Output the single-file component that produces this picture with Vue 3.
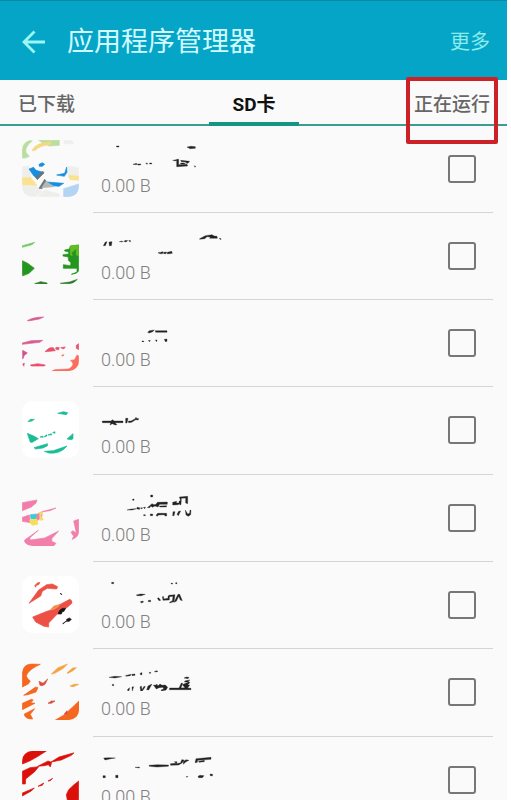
<template>
  <div class="app-manager">
    <!-- Title Bar -->
    <header class="title-bar">
      <button class="back-button" type="button" aria-label="返回">
        <svg width="24" height="24" viewBox="0 0 24 24" fill="none" stroke="currentColor" stroke-width="2.8">
          <path d="M12.500 1.500 2 12l10.500 10.500M2 12h21" />
        </svg>
      </button>
      <h1>应用程序管理器</h1>
      <button class="more-button" type="button">更多</button>
    </header>

    <!-- Tabs -->
    <nav class="tabs">
      <button
        v-for="tab in tabs"
        :key="tab"
        type="button"
        class="tab"
        :class="{ active: tab === activeTab, marked: tab === '正在运行' }"
        @click="activeTab = tab"
      >{{ tab }}</button>
    </nav>

    <!-- App List -->
    <ul class="app-list">
      <li v-for="(app, index) in apps" :key="index" class="app-row">
        <label class="app-label">
          <svg class="app-icon" :class="{ plate: app.plate }" :viewBox="`66 ${app.top} 171 171`" aria-hidden="true">
            <path v-for="(shape, i) in app.icon" :key="i" :fill="shape[0]" :stroke="shape[0]" :d="shape[1]" />
          </svg>
          <span class="app-body">
            <span class="app-text">
              <svg class="app-name" :viewBox="`303 ${app.top} 384 84`" aria-hidden="true">
                <path :d="app.name" />
              </svg>
              <span class="app-size">{{ app.size }}</span>
            </span>
            <input v-model="app.checked" type="checkbox" />
          </span>
        </label>
      </li>
    </ul>
  </div>
</template>

<script setup>
  import { ref } from 'vue';

  const tabs = ['已下载', 'SD卡', '正在运行'];
  const activeTab = ref('SD卡');

  // top is the upper edge of the drawing, icon holds [colour, path] pairs
  const apps = ref([
    {
      top: 45,
      size: '0.00 B',
      checked: false,
      icon: [
        ['#b9dfa0', 'M67 99V66Q70 47 91 46L97 48Q77 61 77 81L88 94 76 99ZM116 46H178V61L148 63 132 56Z'],
        ['#f5d982', 'M96 77Q103 60 128 54L153 50 151 59Q119 61 106 76Z'],
        ['#eeeeec', 'M192 47 214 46 222 56H192ZM67 126 86 123 94 157 67 158ZM204 124 236 128V162L205 155ZM67 181 109 183 125 201 107 214H91Q70 210 67 190ZM133 195 178 207V215H113Z'],
        ['#fae28f', 'M67 158 92 158 111 181 67 179ZM205 151 236 154V166L211 164Z'],
        ['#168fe0', 'M87 132 101 127 108 136 130 142 112 161 101 152ZM117 118 127 113 134 118 127 124 118 124ZM170 150 194 145 200 126 201 142 193 154ZM141 171 191 175 177 184 158 182Z'],
        ['#68767d', 'M107 157 129 139 132 144 112 164ZM117 190 134 163 139 169 126 191Z'],
        ['#b4bab3', 'M137 170 163 185 125 188Z'],
        ['#b4d4f4', 'M191 191 236 177V188Q233 212 211 215H191Z'],
      ],
      name: 'M349 63h8v3h-7zM399 118l11-3v4zM413 117h9v3h-9zM437 115l5-1v4zM449 114h6v3h-6zM561 66l12-2 13 1v5l-16 1zM518 106l11-2v4zM530 103h6v16l25-1 2 5-33 2zM542 106l27 3-5 6-8-1 5-3-17-1zM542 114h12v3h-12zM583 122l4 2-2 3z',
    },
    {
      top: 42,
      size: '0.00 B',
      checked: false,
      icon: [
        ['#78c968', 'M67 98 104 88 96 95 67 103Z'],
        ['#24961f', 'M67 143 83 151 103 166 87 181 67 189ZM211 99 236 96V174Q231 183 214 184L231 177V166H190V155L211 158 213 149 205 142V132L189 129V125L206 123V117L194 114V111L208 108Z'],
        ['#64bd25', 'M211 99 236 96V128L229 126V106L214 120 217 128 211 126Z'],
        ['#287c27', 'M104 212 122 206 141 210V213ZM181 211 209 207 235 198Q231 213 216 213Z'],
      ],
      name: 'M310 98l6-11 5-1-5 12zM327 87l9-1-2 12h-6zM358 86l9-2v3zM371 85l7-3 5 1-5 4zM386 83l5-1v5zM474 119l5-1v4zM481 118l8-2v5l-8 2zM491 118l9-1-2 5h-7zM502 118l13-3 2 6-15 2zM599 77l17-9 20-3 7 4 8 1 1 6h-23l2-4-10-1-7 6-15 2zM657 76l6 1v3z',
    },
    {
      top: 42,
      size: '0.00 B',
      checked: false,
      icon: [
        ['#d65d91', 'M82 62Q97 52 131 51L118 57 90 62ZM67 129 94 122 128 121 119 127 67 133Z'],
        ['#d45192', 'M68 151 82 159 73 166 68 177ZM67 192 73 190 70 206 67 203Z'],
        ['#e9506c', 'M135 155Q148 140 160 143L166 152 150 154ZM168 142 178 143 175 150 167 147ZM182 143 196 141 191 147ZM229 136 236 131V149L229 145ZM91 195 113 191 136 195 133 198H94Z'],
        ['#fb6d5e', 'M231 165 236 168V198Q235 212 218 213H156L165 209 205 207Q217 203 219 193 219 184 211 182L224 179ZM185 166 192 164 188 169Z'],
      ],
      name: 'M443 97l5-5 15-2-5 5-10 4zM466 92h35v5h-34zM426 123h5v3h-5zM445 122l6-1-2 4zM466 120h5l-1 5zM493 118l8-1v7l-5 1z',
    },
    {
      top: 39,
      size: '0.00 B',
      checked: false,
      plate: true,
      icon: [
        ['#18bd96', 'M173 76 190 71 203 74 199 80ZM84 101 91 94 103 94 96 99ZM82 136 103 145 115 152 97 163H91ZM120 147 128 144 129 148ZM131 147 140 140 141 144ZM144 141 154 137 155 141ZM158 134 165 131V136ZM201 153 219 137 219 152 214 155ZM102 179 142 167 143 173 129 180 107 183ZM133 190 160 188 201 174Q182 199 146 195Z'],
      ],
      name: 'M307 99h26l4-4 6 4h26v5h-24l6 6-6 1-8-4-7 4 2-7h-25zM377 91h7l-3 14h-4zM385 99h8l13-7v-3h4v3l5-1v5l-8-1-12 8-9 1z',
    },
    {
      top: 42,
      size: '0.00 B',
      checked: false,
      icon: [
        ['#f37cab', 'M67 83 111 75 108 84 94 96 67 107ZM67 127 88 120 91 143 67 139ZM108 119 126 110 168 99 150 107 127 110 125 128 110 137Z'],
        ['#43c7d0', 'M91 119 109 117 108 132H93Z'],
        ['#f4df5d', 'M89 136 110 132 114 148 97 151 91 145ZM119 113 129 111 122 122 130 134 120 136Z'],
        ['#f27faa', 'M74 195 115 166 89 189 91 195 134 189 176 168 156 190 155 199 168 205 161 213H98Q78 211 74 200ZM221 138 236 133V172Q233 189 216 193L221 184 213 172 218 167 229 174Z'],
      ],
      name: 'M381 105l13-3 16-1-14 4zM411 97l8 1v5l-8-1zM421 99l6-1-1 4zM430 98l6-2-1 5zM398 72h4v4h-4zM452 60h6v6h-6zM442 98l14-12 6 3 6-1 4-6 30-1v7h-23l-5 8-9-3-8 4-4-4-4 5zM479 93l21-1-1 4h-20zM431 119h5v3h-5zM451 117h7v5h-7zM468 121l5-6h27v8h-5l-2-4-18 1-3 4zM518 82l12-3-1 5h8v-5l6-2-2 8-7 4-16 1zM538 66l25-2v22l-6-2V69l-13 1-1 19h-4l2-15zM519 110h6l-3 12h-4zM531 118l5-9 6-1-7 14zM556 105l7 12 6-2 1-10 3 1-1 13-7 5-7-4z',
    },
    {
      top: 42,
      size: '0.00 B',
      checked: false,
      plate: true,
      icon: [
        ['#ed5045', 'M104 71 112 63 120 61 116 68 109 70 107 76ZM87 124 111 91 116 84 140 68 157 66 173 74 170 81 142 79 127 88 122 102ZM98 165 143 147 164 142 177 129 209 112Q217 115 216 123L204 134 172 156 146 183 146 195 132 193 107 180Z'],
        ['#ef914b', 'M151 143 162 132 181 127 172 137Z'],
        ['#1c1715', 'M174 156Q178 142 188 139L197 139 192 148 187 149 184 156ZM188 185 200 176V172L208 168 214 172 208 178 198 178 190 185ZM180 94 185 96V98Z'],
      ],
      name: 'M335 61h6v4h-6zM513 64h5v2h-5zM527 62h4v3h-4zM409 99l12-3 15 1-12 4h-13zM421 119l7-2 3 3-7 3zM445 115h7v4h-7zM472 109l4-2 6 8-5 1zM487 104h4v7l13-2v-6l4-3v14l-19 1zM507 100l18-2-3 21-14 4 3-4 6-2 2-14-11 1zM522 121l12-24h5l8 19-6-2-5-11-7 15z',
    },
    {
      top: 39,
      size: '0.00 B',
      checked: false,
      icon: [
        ['#f5671f', 'M67 111V64Q71 42 94 42L121 43 105 51Q82 65 79 78 83 89 91 93L85 102ZM71 136 107 111 114 113 108 126 84 134ZM67 160 94 148 100 150 92 158 105 160 67 179ZM73 192 104 176 91 193 98 207H88Q76 205 73 196ZM163 212 193 194 222 167 238 152V177Q235 207 213 212Z'],
        ['#f5a33f', 'M154 72 173 54 202 42 190 55 164 70ZM201 69 218 54 229 53 219 62 204 70ZM210 108 223 103 236 103 220 110Z'],
        ['#dc4e3b', 'M117 94 129 100 143 87 135 103 127 107 120 106ZM144 160 154 153 165 153 154 160ZM193 192 201 182 202 192Z'],
      ],
      name: 'M327 82l17-3 21 1-20 4zM337 103h4v4h-4zM376 77l11-3 7-1-3 4-13 2zM396 73l9-1v4l-9 1zM421 69l5-1v6h-5zM448 67h4v3h-4zM463 65l6-3 5 2-6 2zM383 118l6-5-2 9h-4zM396 111l5-1-4 13zM420 111l4-3 2 11 6-10 4 1-9 13h-5zM440 119l4-11 12-6-10 18zM460 105l5 1 6-3 3 5 6-6 6 4 10-1 7 7-5 8-13 3-2-3 8-3-2-5-12 1-8 4zM509 114h28l7-15 4 1-5 14 12-1-8-9 20-9-14 1 3-4 14-2-8 5 8 2-7 8h6l-6 9 10 1v4h-65zM552 84l7-3 8 1-3 4z',
    },
    {
      top: 48,
      size: '0.00 B',
      checked: false,
      icon: [
        ['#dc100b', 'M67 87V69Q72 49 90 48H139L112 65 89 78ZM67 109 90 98 116 95 104 110 77 132 76 147H67ZM113 94 144 78 155 82 151 96 145 89 133 92ZM153 81 177 66 223 53 214 61 184 75ZM67 174 103 159 94 168 67 183ZM114 154 131 144 127 151ZM144 138 158 130 151 137ZM202 195 199 179 206 164 220 151 236 138V219H211Z'],
      ],
      name: 'M311 69l17-1 18 1-13 2-18 4zM309 122h7v6h-7zM347 121h7v7h-7zM405 97l13-1v3zM447 91l25-2 34 1-1 4-34 2-23-2zM511 86l17-1-5-5h8l-1 6 12-3 3-9 8 1-7 9-10 6-24 1zM550 80l8-6 9 2-9 4-8 8zM585 83l3-12 45-4v6l-40 3-1 6zM596 79l17-3v4l-16 2zM594 124l6-3 12 1-5 6h-11zM630 117l8 1-1 5-6-1zM558 125l6-1-3 3z',
    },
  ]);
</script>

<style>
  body {
    margin: 0;
    background-color: #ffffff;
  }
</style>

<style scoped>
  .app-manager {
    display: flex;
    flex-direction: column;
    height: 100vh;
    margin-right: 4px;
    overflow: hidden;
    background-color: #fafafa;
    font-family: Roboto, "Noto Sans CJK SC", sans-serif;
  }

  button {
    padding: 0;
    border: none;
    background: none;
    font-family: inherit;
    cursor: pointer;
  }

  /* Title Bar styles */
  .title-bar {
    display: flex;
    flex: none;
    align-items: center;
    box-sizing: border-box;
    height: 80px;
    padding: 2px 17px 0 22px;
    border-top: 1px solid #088aa6;
    background-color: #05a5c8;
  }

  .back-button {
    display: flex;
    color: #9af7f3;
  }

  .title-bar h1 {
    flex: 1;
    margin: 0 0 0 21px;
    color: #d3fbff;
    font-size: 27px;
    font-weight: 400;
    line-height: 40px;
  }

  .more-button {
    color: #8cecea;
    font-size: 20px;
    line-height: 40px;
  }

  /* Tab styles */
  .tabs {
    display: grid;
    flex: none;
    grid-template-columns: 1fr 90px 1fr;
    box-sizing: border-box;
    height: 46px;
    padding: 0 17px 0 18px;
    border-bottom: 2px solid #3a9d94;
  }

  .tab {
    position: relative;
    justify-self: start;
    padding-top: 4px;
    color: #666666;
    font-size: 19px;
    font-weight: 500;
    line-height: 42px;
    white-space: nowrap;
  }

  .tab:last-child {
    justify-self: end;
  }

  .tab.active {
    justify-self: stretch;
    color: #111111;
    font-weight: 700;
  }

  .tab.active::after {
    content: "";
    position: absolute;
    right: 0;
    bottom: 0;
    left: 0;
    height: 4px;
    background-color: #159685;
  }

  .tab.marked::before {
    content: "";
    position: absolute;
    top: -3px;
    right: -8px;
    bottom: -18px;
    left: -8px;
    z-index: 1;
    border: 4px solid #cb2127;
    border-radius: 2px;
  }

  /* App List styles */
  .app-list {
    flex: 1;
    min-height: 0;
    margin: 0;
    padding: 0;
    overflow: hidden;
    list-style: none;
  }

  .app-row {
    height: 87px;
  }

  .app-row:nth-child(3n + 4) {
    height: 88px;
  }

  .app-label {
    display: flex;
    height: 100%;
    padding: 0 14px 0 22px;
    cursor: pointer;
  }

  .app-icon {
    flex: none;
    width: 57px;
    height: 57px;
    margin: 14px 14px 0 0;
    border-radius: 10px;
    stroke-width: 2;
  }

  .app-icon.plate {
    background-color: #ffffff;
  }

  .app-body {
    display: flex;
    flex: 1;
    justify-content: space-between;
    box-sizing: border-box;
    padding: 0 17px 0 8px;
    border-bottom: 1px solid #d4d4d4;
  }

  .app-text {
    display: flex;
    flex-direction: column;
    padding-top: 14px;
  }

  .app-name {
    width: 128px;
    height: 28px;
    fill: #222222;
    stroke: #222222;
    stroke-width: 1;
  }

  .app-size {
    margin-top: 7px;
    color: #808080;
    font-size: 18px;
    font-weight: 300;
    line-height: 22px;
  }

  input {
    appearance: none;
    box-sizing: border-box;
    width: 28px;
    height: 28px;
    margin: 29px 0 0;
    border: 2px solid #777777;
    border-radius: 3px;
    cursor: pointer;
  }

  input:checked {
    background-color: #159685;
  }
</style>
